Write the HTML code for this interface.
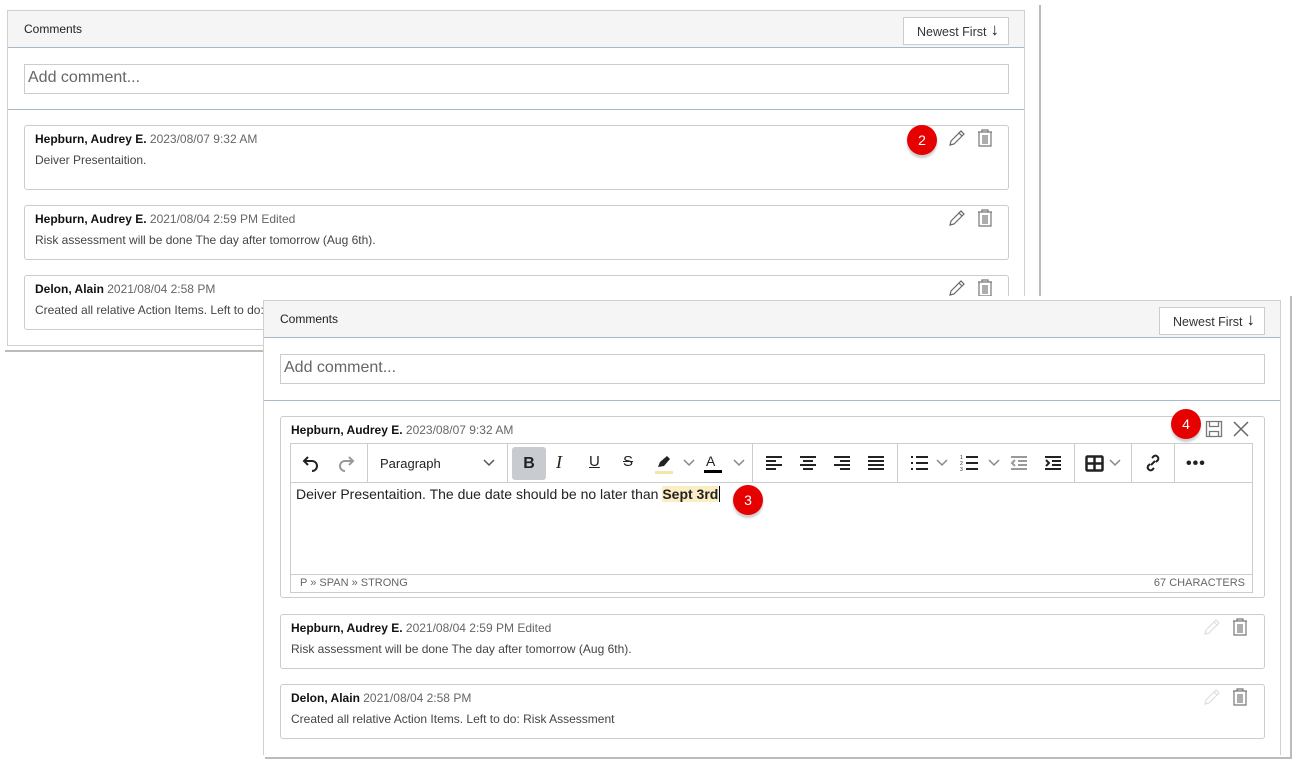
<!DOCTYPE html><html><head><meta charset="utf-8"><style>
*{box-sizing:border-box;margin:0;padding:0}
body{width:1303px;height:772px;background:#fff;position:relative;overflow:hidden;font-family:"Liberation Sans",sans-serif;color:#333}
.abs{position:absolute}
.panel{position:absolute;background:#fff;border:1px solid #d0d0d0}
.hdr{position:absolute;left:0;right:0;top:0;height:37px;background:#f5f5f5;border-bottom:1px solid #a9b8cc}
.hdr .t{position:absolute;left:16px;top:11px;font-size:12px;color:#222}
.btn{position:absolute;right:15px;top:6px;height:28px;width:106px;border:1px solid #ccc;background:#fff;font-size:12.5px;color:#333;padding:7px 0 0 13px}
.btn span{font-size:17px;position:absolute;right:9px;top:2px;color:#222}
.inp{position:absolute;border:1px solid #ccc;height:30px;font-size:16px;color:#666;padding:4px 3px}
.sep{position:absolute;left:0;right:0;height:1px;background:#a9b8cc}
.card{position:absolute;border:1px solid #ccc;border-radius:3px;background:#fff}
.card .n{position:absolute;left:10px;top:6px;font-size:12px;color:#111;white-space:nowrap;font-weight:bold}
.card .n i{font-style:normal;color:#666;font-weight:normal}
.card .b{position:absolute;left:10px;top:27px;font-size:12px;color:#444;white-space:nowrap}
.badge{position:absolute;width:30px;height:30px;border-radius:50%;background:#e60000;color:#fff;font-size:14px;text-align:center;line-height:30px;box-shadow:0 3px 2px #ccc}
.ic{position:absolute}
.tb{position:absolute;top:0;height:38px;border-right:1px solid #ccc}
</style></head><body>
<div class="abs" style="left:5px;top:5px;width:1036px;height:347px;border-right:2px solid #bbb;border-bottom:2px solid #bbb"></div>
<div class="panel" style="left:7px;top:10px;width:1018px;height:336px">
 <div class="hdr"><div class="t">Comments</div><div class="btn">Newest First <span>↓</span></div></div>
 <div class="inp" style="left:16px;top:53px;width:985px">Add comment...</div>
 <div class="sep" style="top:98px"></div>
 <div class="card" style="left:16px;top:114px;width:985px;height:65px"><div class="n">Hepburn, Audrey E. <i>2023/08/07 9:32 AM</i></div><div class="b">Deiver Presentaition.</div></div>
 <div class="card" style="left:16px;top:194px;width:985px;height:55px"><div class="n">Hepburn, Audrey E. <i>2021/08/04 2:59 PM Edited</i></div><div class="b">Risk assessment will be done The day after tomorrow (Aug 6th).</div></div>
 <div class="card" style="left:16px;top:264px;width:985px;height:55px"><div class="n">Delon, Alain <i>2021/08/04 2:58 PM</i></div><div class="b">Created all relative Action Items. Left to do: Risk Assessment</div></div>
</div>
<svg class="ic" style="left:947px;top:128px" width="20" height="20" viewBox="0 0 20 20" fill="none" stroke="#666" stroke-width="1.2"><path d="M3 17l1-4L14 3l3 3L7 16z M12 5l3 3"/></svg>
<svg class="ic" style="left:976px;top:128px" width="18" height="20" viewBox="0 0 18 20" fill="none" stroke="#777" stroke-width="1.2"><path d="M2 4h14M6 4V2h6v2M3 4v14h12V4M7 7v9M9 7v9M11 7v9"/></svg>
<svg class="ic" style="left:947px;top:208px" width="20" height="20" viewBox="0 0 20 20" fill="none" stroke="#666" stroke-width="1.2"><path d="M3 17l1-4L14 3l3 3L7 16z M12 5l3 3"/></svg>
<svg class="ic" style="left:976px;top:208px" width="18" height="20" viewBox="0 0 18 20" fill="none" stroke="#777" stroke-width="1.2"><path d="M2 4h14M6 4V2h6v2M3 4v14h12V4M7 7v9M9 7v9M11 7v9"/></svg>
<svg class="ic" style="left:947px;top:278px" width="20" height="20" viewBox="0 0 20 20" fill="none" stroke="#666" stroke-width="1.2"><path d="M3 17l1-4L14 3l3 3L7 16z M12 5l3 3"/></svg>
<svg class="ic" style="left:976px;top:278px" width="18" height="20" viewBox="0 0 18 20" fill="none" stroke="#777" stroke-width="1.2"><path d="M2 4h14M6 4V2h6v2M3 4v14h12V4M7 7v9M9 7v9M11 7v9"/></svg>
<div class="badge" style="left:907px;top:125px">2</div>

<div class="abs" style="left:265px;top:296px;width:1027px;height:463px;border-right:2px solid #bbb;border-bottom:2px solid #bbb;background:#fff"></div>
<div class="panel" style="left:263px;top:300px;width:1018px;height:455px;border-bottom:none">
 <div class="hdr"><div class="t">Comments</div><div class="btn">Newest First <span>↓</span></div></div>
 <div class="inp" style="left:16px;top:53px;width:985px">Add comment...</div>
 <div class="sep" style="top:99px"></div>
 <div class="card" style="left:16px;top:115px;width:985px;height:182px"><div class="n">Hepburn, Audrey E. <i>2023/08/07 9:32 AM</i></div></div>
 <div class="card" style="left:16px;top:313px;width:985px;height:55px"><div class="n">Hepburn, Audrey E. <i>2021/08/04 2:59 PM Edited</i></div><div class="b">Risk assessment will be done The day after tomorrow (Aug 6th).</div></div>
 <div class="card" style="left:16px;top:383px;width:985px;height:55px"><div class="n">Delon, Alain <i>2021/08/04 2:58 PM</i></div><div class="b">Created all relative Action Items. Left to do: Risk Assessment</div></div>
</div>
<div class="abs" style="left:290px;top:443px;width:963px;height:150px;border:1px solid #ccc;background:#fff">
 <div class="abs" style="left:0;top:0;width:961px;height:39px;border-bottom:1px solid #ccc">
  <div class="tb" style="left:0;width:77px"></div>
  <div class="tb" style="left:77px;width:140px"></div>
  <div class="tb" style="left:217px;width:245px"></div>
  <div class="tb" style="left:462px;width:145px"></div>
  <div class="tb" style="left:607px;width:177px"></div>
  <div class="tb" style="left:784px;width:57px"></div>
  <div class="tb" style="left:841px;width:43px"></div>
  <svg class="ic" style="left:10px;top:9px" width="20" height="20" viewBox="0 0 20 20" fill="none" stroke="#222" stroke-width="2"><path d="M7 4L3 8l4 4M3 8h8a5 5 0 010 10"/></svg>
  <svg class="ic" style="left:45px;top:9px" width="20" height="20" viewBox="0 0 20 20" fill="none" stroke="#999" stroke-width="2"><path d="M13 4l4 4-4 4M17 8H9a5 5 0 000 10"/></svg>
  <div class="abs" style="left:89px;top:12px;font-size:13px;color:#222">Paragraph</div>
  <svg class="ic" style="left:192px;top:14px" width="12" height="10" viewBox="0 0 12 10" fill="none" stroke="#555" stroke-width="1.5"><path d="M1 2l5 5 5-5"/></svg>
  <div class="abs" style="left:221px;top:3px;width:34px;height:33px;background:#c8cbd0;border-radius:3px;font-weight:bold;font-size:16px;text-align:center;line-height:33px;color:#222">B</div>
  <div class="abs" style="left:265px;top:8px;font-family:'Liberation Serif',serif;font-style:italic;font-size:18px;color:#222">I</div>
  <div class="abs" style="left:298px;top:9px;font-size:15px;color:#222;text-decoration:underline">U</div>
  <div class="abs" style="left:332px;top:9px;font-size:15px;color:#222;text-decoration:line-through">S</div>
  <svg class="ic" style="left:363px;top:9px" width="20" height="22" viewBox="0 0 20 22"><path d="M4 14l2-5 7-6 3 3-6 7z" fill="#222"/><rect x="1" y="18" width="18" height="3" fill="#f5e6a8"/></svg>
  <svg class="ic" style="left:392px;top:14px" width="12" height="10" viewBox="0 0 12 10" fill="none" stroke="#888" stroke-width="1.5"><path d="M1 2l5 5 5-5"/></svg>
  <div class="abs" style="left:415px;top:9px;font-size:14px;color:#222">A</div>
  <div class="abs" style="left:413px;top:26px;width:18px;height:3px;background:#000"></div>
  <svg class="ic" style="left:442px;top:14px" width="12" height="10" viewBox="0 0 12 10" fill="none" stroke="#888" stroke-width="1.5"><path d="M1 2l5 5 5-5"/></svg>
  <svg class="ic" style="left:474px;top:11px" width="18" height="16" viewBox="0 0 18 16" stroke="#222" stroke-width="2"><path d="M1 2h16M1 6h10M1 10h16M1 14h10"/></svg>
  <svg class="ic" style="left:508px;top:11px" width="18" height="16" viewBox="0 0 18 16" stroke="#222" stroke-width="2"><path d="M1 2h16M4 6h10M1 10h16M4 14h10"/></svg>
  <svg class="ic" style="left:542px;top:11px" width="18" height="16" viewBox="0 0 18 16" stroke="#222" stroke-width="2"><path d="M1 2h16M7 6h10M1 10h16M7 14h10"/></svg>
  <svg class="ic" style="left:576px;top:11px" width="18" height="16" viewBox="0 0 18 16" stroke="#222" stroke-width="2"><path d="M1 2h16M1 6h16M1 10h16M1 14h16"/></svg>
  <svg class="ic" style="left:619px;top:11px" width="18" height="16" viewBox="0 0 18 16" stroke="#222" stroke-width="2"><path d="M6 2h12M6 8h12M6 14h12M1 2h2M1 8h2M1 14h2"/></svg>
  <svg class="ic" style="left:645px;top:14px" width="12" height="10" viewBox="0 0 12 10" fill="none" stroke="#888" stroke-width="1.5"><path d="M1 2l5 5 5-5"/></svg>
  <svg class="ic" style="left:669px;top:10px" width="18" height="18" viewBox="0 0 18 18"><path d="M6 3h12M6 9h12M6 15h12" stroke="#222" stroke-width="2"/><text x="0" y="5" font-size="5" fill="#222" font-family="Liberation Sans">1</text><text x="0" y="11" font-size="5" fill="#222" font-family="Liberation Sans">2</text><text x="0" y="17" font-size="5" fill="#222" font-family="Liberation Sans">3</text></svg>
  <svg class="ic" style="left:697px;top:14px" width="12" height="10" viewBox="0 0 12 10" fill="none" stroke="#888" stroke-width="1.5"><path d="M1 2l5 5 5-5"/></svg>
  <svg class="ic" style="left:719px;top:11px" width="18" height="16" viewBox="0 0 18 16" stroke="#999" stroke-width="2" fill="none"><path d="M1 2h16M8 6h9M8 10h9M1 14h16M5 5L2 8l3 3"/></svg>
  <svg class="ic" style="left:753px;top:11px" width="18" height="16" viewBox="0 0 18 16" stroke="#222" stroke-width="2" fill="none"><path d="M1 2h16M8 6h9M8 10h9M1 14h16M2 5l3 3-3 3"/></svg>
  <svg class="ic" style="left:794px;top:11px" width="20" height="18" viewBox="0 0 20 18" fill="none" stroke="#222" stroke-width="2.5"><rect x="1.5" y="1.5" width="16" height="14" rx="1"/><path d="M1.5 8.5h16M9.5 1.5v14"/></svg>
  <svg class="ic" style="left:818px;top:14px" width="12" height="10" viewBox="0 0 12 10" fill="none" stroke="#888" stroke-width="1.5"><path d="M1 2l5 5 5-5"/></svg>
  <svg class="ic" style="left:852px;top:9px" width="20" height="20" viewBox="0 0 20 20" fill="none" stroke="#222" stroke-width="2"><path d="M8 12l4-4M9 5l2-2a3 3 0 014 4l-2 2M11 15l-2 2a3 3 0 01-4-4l2-2"/></svg>
  <div class="abs" style="left:895px;top:11px;font-size:16px;font-weight:bold;color:#222;letter-spacing:1px">•••</div>
 </div>
 <div class="abs" style="left:5px;top:42px;font-size:14px;color:#222;white-space:nowrap">Deiver Presentaition. The due date should be no later than <b style="background:#fbeec4">Sept 3rd</b><span style="border-left:1px solid #000;margin-left:1px"></span></div>
 <div class="abs" style="left:0;top:130px;width:961px;height:1px;background:#ccc"></div>
 <div class="abs" style="left:9px;top:133px;font-size:11px;color:#666">P » SPAN » STRONG</div>
 <div class="abs" style="right:7px;top:133px;font-size:11px;color:#666">67 CHARACTERS</div>
</div>
<div class="badge" style="left:733px;top:485px">3</div>
<svg class="ic" style="left:1205px;top:420px" width="18" height="18" viewBox="0 0 18 18" fill="none" stroke="#777" stroke-width="1.3"><path d="M1.5 1.5h15v15h-15z M4.5 1.5v5h9v-5 M4.5 16.5v-5h9v5"/></svg>
<svg class="ic" style="left:1233px;top:421px" width="16" height="16" viewBox="0 0 16 16" stroke="#666" stroke-width="1.5"><path d="M1 1l14 14M15 1L1 15"/></svg>
<div class="badge" style="left:1171px;top:409px">4</div>
<svg class="ic" style="left:1202px;top:617px" width="20" height="20" viewBox="0 0 20 20" fill="none" stroke="#ddd" stroke-width="1.2"><path d="M3 17l1-4L14 3l3 3L7 16z M12 5l3 3"/></svg>
<svg class="ic" style="left:1231px;top:617px" width="18" height="20" viewBox="0 0 18 20" fill="none" stroke="#777" stroke-width="1.2"><path d="M2 4h14M6 4V2h6v2M3 4v14h12V4M7 7v9M9 7v9M11 7v9"/></svg>
<svg class="ic" style="left:1202px;top:687px" width="20" height="20" viewBox="0 0 20 20" fill="none" stroke="#ddd" stroke-width="1.2"><path d="M3 17l1-4L14 3l3 3L7 16z M12 5l3 3"/></svg>
<svg class="ic" style="left:1231px;top:687px" width="18" height="20" viewBox="0 0 18 20" fill="none" stroke="#777" stroke-width="1.2"><path d="M2 4h14M6 4V2h6v2M3 4v14h12V4M7 7v9M9 7v9M11 7v9"/></svg>
</body></html>
